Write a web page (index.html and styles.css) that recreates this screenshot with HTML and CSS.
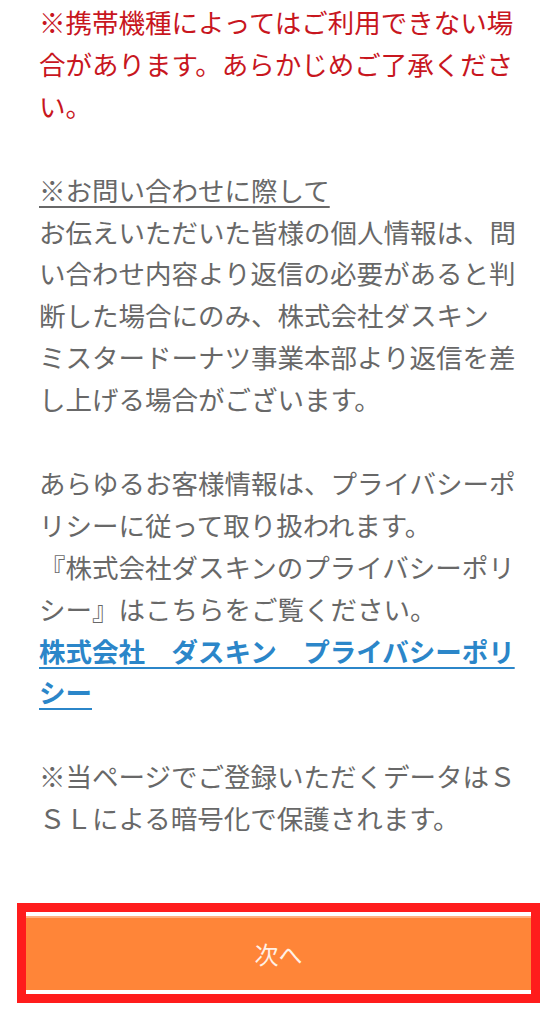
FILE: index.html
```html
<!DOCTYPE html>
<html lang="ja">
<head>
<meta charset="utf-8">
<title>お問い合わせ</title>
<link rel="stylesheet" href="styles.css">
</head>
<body>
<main class="page">
  <div class="content">
    <p class="notice">※携帯機種によってはご利用できない場合があります。あらかじめご了承ください。</p>
    <p><span class="heading">※お問い合わせに際して</span><br>お伝えいただいた皆様の個人情報は、問い合わせ内容より返信の必要があると判断した場合にのみ、株式会社ダスキン　ミスタードーナツ事業本部より返信を差し上げる場合がございます。</p>
    <p>あらゆるお客様情報は、プライバシーポリシーに従って取り扱われます。<br>『株式会社ダスキンのプライバシーポリシー』はこちらをご覧ください。<br><a class="policy-link" href="#">株式会社　ダスキン　プライバシーポリシー</a></p>
    <p class="last">※当ページでご登録いただくデータはＳＳＬによる暗号化で保護されます。</p>
  </div>
  <div class="btn-frame">
    <a class="next-btn" href="#">次へ</a>
  </div>
</main>
</body>
</html>
```

FILE: styles.css
```css
html, body {
  margin: 0;
  padding: 0;
  background: #ffffff;
}

body {
  font-family: "Noto Sans CJK JP", "Noto Sans", sans-serif;
}

.page {
  padding-top: 1px;
}

.content {
  margin-left: 39px;
  width: 477px;
  font-size: 26.5px;
  line-height: 41.9px;
  color: #686868;
}

.content p {
  margin: 0 0 41.9px;
}

.content p.last {
  margin-bottom: 0;
}

.notice {
  color: #c8161e;
  font-weight: 400;
}

.heading {
  text-decoration: underline;
  text-decoration-thickness: 2px;
  text-underline-offset: 5px;
  color: #686868;
}

.policy-link {
  color: #2b86c9;
  font-weight: 700;
  text-decoration: underline;
  text-decoration-thickness: 2px;
  text-underline-offset: 5px;
}

.btn-frame {
  margin: 64px 18px 0 17px;
  border: 9px solid #ff1c1c;
  background: #ffffff;
}

.next-btn {
  display: flex;
  align-items: center;
  justify-content: center;
  height: 74px;
  border-top: 4px solid #ffffff;
  border-bottom: 4px solid #ffffff;
  background: #ff8538;
  box-shadow: inset 0 2px 0 rgba(255, 255, 255, 0.35);
  color: #fff1e6;
  font-size: 24px;
  font-weight: 400;
  text-decoration: none;
}
```
